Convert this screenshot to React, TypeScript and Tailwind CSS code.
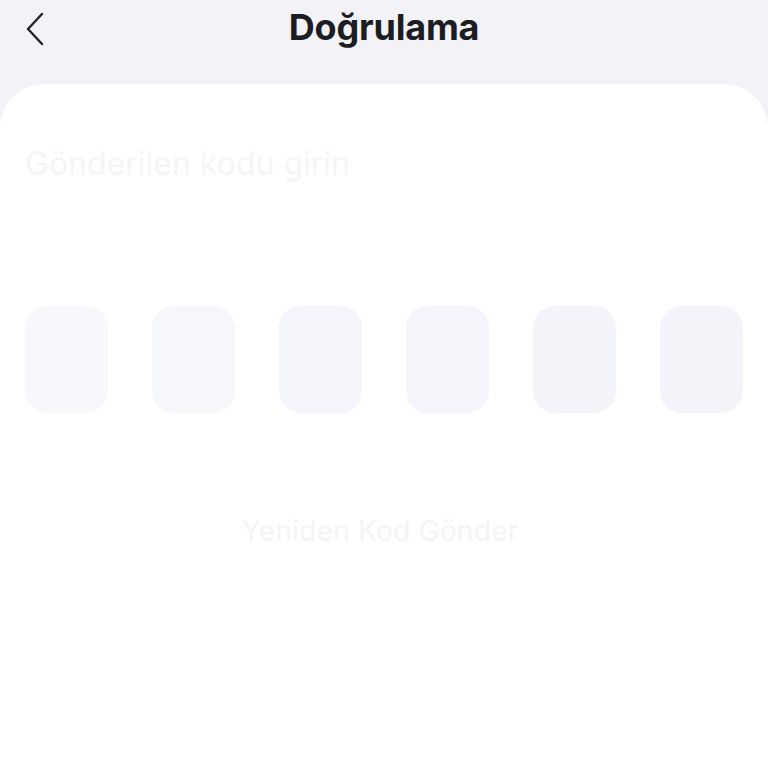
export default function App() {
  const boxes = ["bg-[#f8f8fc]", "bg-[#f6f7fb]", "bg-[#f4f5fa]", "bg-[#f4f5fa]", "bg-[#f3f4f9]", "bg-[#f3f4f9]"]

  return (
    <div className="flex h-[768px] w-[768px] flex-col bg-[#f2f2f7] font-['Inter',sans-serif]">
      {/* header */}
      <header className="relative flex h-[84px] shrink-0 items-start justify-center pt-[4px]">
        <button className="absolute left-[22px] top-[10px] p-[2px]">
          <svg width="22" height="34" viewBox="0 0 22 34" fill="none">
            <path d="M18 2 L4 17 L18 32" stroke="#222" strokeWidth="2.4" strokeLinecap="round" strokeLinejoin="round" />
          </svg>
        </button>
        <h1 className="text-[36px] font-bold leading-[46px] tracking-[-0.2px] text-[#1c1d22]">Doğrulama</h1>
      </header>

      {/* card */}
      <main className="flex flex-1 flex-col rounded-t-[44px] bg-white px-[25px] pt-[60px]">
        <p className="text-[32px] leading-[40px] text-[#f5f5f7]">Gönderilen kodu girin</p>

        <div className="mt-[122px] flex justify-between">
          {boxes.map((c, i) => (
            <div key={i} className={`h-[107px] w-[83px] rounded-[22px] ${c}`} />
          ))}
        </div>

        <button className="mr-[8px] mt-[100px] self-center text-[28.5px] leading-[36px] text-[#f4f4f6]">Yeniden Kod Gönder</button>
      </main>
    </div>
  )
}
